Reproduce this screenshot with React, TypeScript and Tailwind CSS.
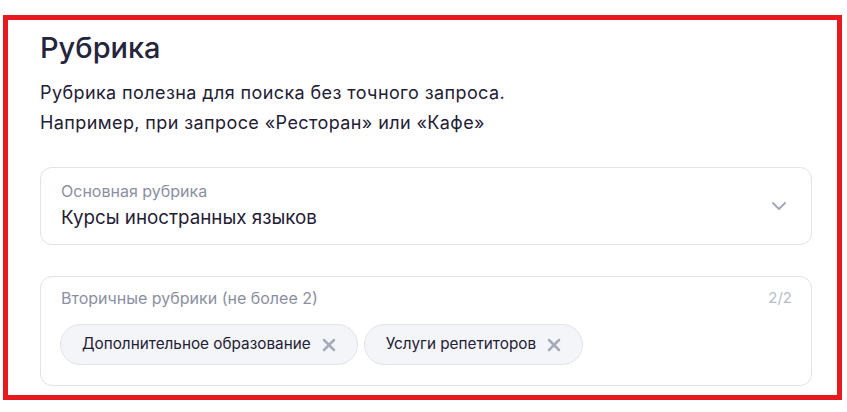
import React from 'react';

function Chevron() {
  return (
    <svg width="16" height="10" viewBox="0 0 16 10" fill="none">
      <path d="M2 2l6 6 6-6" stroke="#a3a8ba" strokeWidth="2" strokeLinecap="round" strokeLinejoin="round" />
    </svg>
  );
}

function Cross() {
  return (
    <svg width="14" height="14" viewBox="0 0 14 14" fill="none">
      <path d="M2 2l10 10M12 2L2 12" stroke="#a6abb9" strokeWidth="2.5" strokeLinecap="round" />
    </svg>
  );
}

export default function App() {
  const chips = ['Дополнительное образование', 'Услуги репетиторов'];

  return (
    <div className="w-[847px] h-[412px] bg-white pt-[15px] pl-[3px]" style={{ fontFamily: 'Inter, "Noto Sans", sans-serif' }}>
      <div className="w-[839px] h-[385px] border-[5px] border-[#e8191e] pl-[32px] pr-[25px] pt-[8px]">
        {/* Header */}
        <h1 className="text-[29px] leading-[40px] font-medium text-[#24243c]">Рубрика</h1>
        <p className="mt-[10px] text-[18px] tracking-[0.4px] leading-[30px] text-[#1f2035]">
          Рубрика полезна для поиска без точного запроса.
          <br />
          Например, при запросе «Ресторан» или «Кафе»
        </p>

        {/* Main category */}
        <div className="mt-[29px] h-[78px] rounded-[12px] border border-[#e2e3ea] flex items-center justify-between pl-[20px] pr-[24px]">
          <div>
            <p className="text-[16px] leading-[20px] text-[#8b8fa1]">Основная рубрика</p>
            <p className="mt-[4px] text-[18.8px] leading-[26px] text-[#1f2035]">Курсы иностранных языков</p>
          </div>
          <Chevron />
        </div>

        {/* Secondary categories */}
        <div className="mt-[31px] h-[110px] rounded-[12px] border border-[#e2e3ea] pl-[19px] pr-[19px] pt-[11px]">
          <div className="flex justify-between">
            <p className="text-[16px] leading-[20px] text-[#8b8fa1] pl-[1px]">Вторичные рубрики (не более 2)</p>
            <p className="text-[15px] leading-[20px] text-[#b8bcc8]">2/2</p>
          </div>
          <div className="mt-[16px] flex gap-[6px]">
            {chips.map((chip) => (
              <div key={chip} className="h-[41px] rounded-full bg-[#f4f5f9] border border-[#e2e3ea] flex items-center gap-[11px] pl-[21px] pr-[21px]">
                <span className="text-[15.3px] text-[#1f2035]">{chip}</span>
                <Cross />
              </div>
            ))}
          </div>
        </div>
      </div>
    </div>
  );
}
